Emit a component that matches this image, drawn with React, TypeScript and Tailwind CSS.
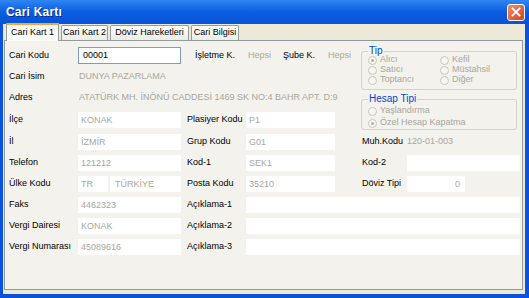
import React from "react";

const font = { fontFamily: '"Liberation Sans", Arial, sans-serif' };

function Field({ value, className = "", right = false }: { value?: string; className?: string; right?: boolean }) {
  return (
    <div className={`h-[16px] bg-white text-[#a8a79e] leading-[16px] px-[3px] whitespace-nowrap overflow-hidden ${right ? "text-right pr-[5px]" : ""} ${className}`}>
      {value}
    </div>
  );
}

function Label({ children, className = "" }: { children: React.ReactNode; className?: string }) {
  return <div className={`text-black whitespace-nowrap ${className}`}>{children}</div>;
}

function Radio({ label, checked = false }: { label: string; checked?: boolean }) {
  return (
    <div className="flex items-center h-[10px] gap-[3px]">
      <span className="w-[9px] h-[9px] rounded-full border border-[#cac8bb] bg-[#f7f6f1] flex items-center justify-center">
        {checked && <span className="w-[3px] h-[3px] rounded-full bg-[#b5b3a6]" />}
      </span>
      <span className="text-[#a8a79e]">{label}</span>
    </div>
  );
}

function Tabs() {
  const tabs = [
    { label: "Cari Kart 1", w: "w-[53px]" },
    { label: "Cari Kart 2", w: "w-[47px]" },
    { label: "Döviz Hareketleri", w: "w-[79px]" },
    { label: "Cari Bilgisi", w: "w-[48px]" },
  ];
  return (
    <div className="flex items-end h-[16px] pl-[2px] gap-[2px]">
      {tabs.map((t, i) =>
        i === 0 ? (
          <div key={t.label} className={`${t.w} h-[18px] -mb-[1px] relative z-10 bg-[#fbfbf9] border-x border-[#919b9c] border-t-[2px] border-t-[#f5a934] flex items-center justify-center text-black`}>
            {t.label}
          </div>
        ) : (
          <div key={t.label} className={`${t.w} h-[15px] bg-gradient-to-b from-white to-[#ecebe5] border border-b-0 border-[#919b9c] rounded-t-[2px] flex items-center justify-center text-black`}>
            {t.label}
          </div>
        )
      )}
    </div>
  );
}

export default function App() {
  return (
    <div className="w-[529px] h-[298px] flex flex-col bg-[#0a52dc] text-[9px] overflow-hidden" style={font}>
      {/* title bar */}
      <div className="h-[24px] flex items-center justify-between pl-[6px] pr-[4px] bg-gradient-to-b from-[#2f86f2] via-[#0a5ddf] to-[#0852d6]">
        <span className="text-white font-bold text-[12px] tracking-[0.2px] [text-shadow:1px_1px_0_#0a2a8a]">Cari Kartı</span>
        <div className="w-[18px] h-[17px] rounded-[3px] border border-white bg-gradient-to-br from-[#f08a6a] to-[#d4421c] flex items-center justify-center">
          <svg width="10" height="10" viewBox="0 0 10 10">
            <path d="M1.5 1.5 L8.5 8.5 M8.5 1.5 L1.5 8.5" stroke="white" strokeWidth="1.8" strokeLinecap="square" />
          </svg>
        </div>
      </div>

      {/* body */}
      <div className="flex-1 flex flex-col ml-[3px] mr-[4px] mb-[4px] bg-[#ece9d8] pl-[1px] pr-[2px] pb-[4px]">
        <Tabs />
        <div className="flex-1 border border-[#919b9c] bg-[#f3f2ec] pl-[4px] pt-[4px]">
          <div className="grid grid-cols-[69px_103px_65px_89px_26px_159px] grid-rows-[21px_21px_22px_22px_21px_21px_21px_21px_21px_21px] items-center">
            {/* row 1 */}
            <Label className="col-start-1">Cari Kodu</Label>
            <div className="h-[17px] border border-[#7f9db9] bg-white text-black leading-[15px] px-[4px]">00001</div>
            <div className="col-span-3 flex items-center pl-[14px]">
              <span className="text-black">İşletme K.</span>
              <span className="ml-[13px] text-[#a8a79e]">Hepsi</span>
              <span className="ml-[12px] text-black">Şube K.</span>
              <span className="ml-[13px] text-[#a8a79e]">Hepsi</span>
            </div>

            {/* right group boxes */}
            <div className="col-start-6 row-start-1 row-span-4 self-stretch flex flex-col pt-[1px] pr-[3px] gap-[2px]">
              <fieldset className="border border-[#d5d3c6] rounded-[3px] h-[44px] px-[6px]">
                <legend className="text-[#0046d5] text-[10px] leading-[10px] px-[1px]">Tip</legend>
                <div className="grid grid-cols-[72px_1fr] gap-y-0 -mt-[1px]">
                  <Radio label="Alıcı" checked />
                  <Radio label="Kefil" />
                  <Radio label="Satıcı" />
                  <Radio label="Müstahsil" />
                  <Radio label="Toptancı" />
                  <Radio label="Diğer" />
                </div>
              </fieldset>
              <fieldset className="border border-[#d5d3c6] rounded-[3px] h-[36px] px-[6px] mt-[2px]">
                <legend className="text-[#0046d5] text-[10px] leading-[10px] px-[1px]">Hesap Tipi</legend>
                <div className="flex flex-col gap-[2px] pt-[2px]">
                  <Radio label="Yaşlandırma" />
                  <Radio label="Özel Hesap Kapatma" checked />
                </div>
              </fieldset>
            </div>

            {/* row 2 */}
            <Label className="col-start-1">Cari İsim</Label>
            <div className="col-span-3 text-[#a8a79e] px-[1px]">DUNYA PAZARLAMA</div>

            {/* row 3 */}
            <Label className="col-start-1">Adres</Label>
            <div className="col-span-4 text-[#a8a79e] px-[1px] whitespace-nowrap">ATATÜRK MH. İNÖNÜ CADDESİ 1469 SK NO:4 BAHR APT. D:9</div>

            {/* row 4 */}
            <Label className="col-start-1">İlçe</Label>
            <Field value="KONAK" />
            <Label className="pl-[6px]">Plasiyer Kodu</Label>
            <Field value="P1" />

            {/* row 5 */}
            <Label className="col-start-1">İl</Label>
            <Field value="İZMİR" />
            <Label className="pl-[6px]">Grup Kodu</Label>
            <Field value="G01" />
            <div className="col-start-6 flex items-center whitespace-nowrap">
              <Label className="w-[46px] pl-[1px]">Muh.Kodu</Label>
              <span className="text-[#a8a79e]">120-01-003</span>
            </div>

            {/* row 6 */}
            <Label className="col-start-1">Telefon</Label>
            <Field value="121212" />
            <Label className="pl-[6px]">Kod-1</Label>
            <Field value="SEK1" />
            <div className="col-start-6 flex items-center">
              <Label className="w-[46px] pl-[1px]">Kod-2</Label>
              <Field className="flex-1" />
            </div>

            {/* row 7 */}
            <Label className="col-start-1">Ülke Kodu</Label>
            <div className="flex gap-[2px]">
              <Field value="TR" className="w-[30px]" />
              <Field value="TÜRKİYE" className="flex-1 pl-[5px]" />
            </div>
            <Label className="pl-[6px]">Posta Kodu</Label>
            <Field value="35210" />
            <div className="col-start-6 flex items-center">
              <Label className="w-[46px] pl-[1px]">Döviz Tipi</Label>
              <Field value="0" right className="w-[58px]" />
            </div>

            {/* row 8 */}
            <Label className="col-start-1">Faks</Label>
            <Field value="4462323" />
            <Label className="pl-[6px]">Açıklama-1</Label>
            <Field className="col-span-3" />

            {/* row 9 */}
            <Label className="col-start-1">Vergi Dairesi</Label>
            <Field value="KONAK" />
            <Label className="pl-[6px]">Açıklama-2</Label>
            <Field className="col-span-3" />

            {/* row 10 */}
            <Label className="col-start-1">Vergi Numarası</Label>
            <Field value="45089616" />
            <Label className="pl-[6px]">Açıklama-3</Label>
            <Field className="col-span-3" />
          </div>
        </div>
      </div>
    </div>
  );
}
